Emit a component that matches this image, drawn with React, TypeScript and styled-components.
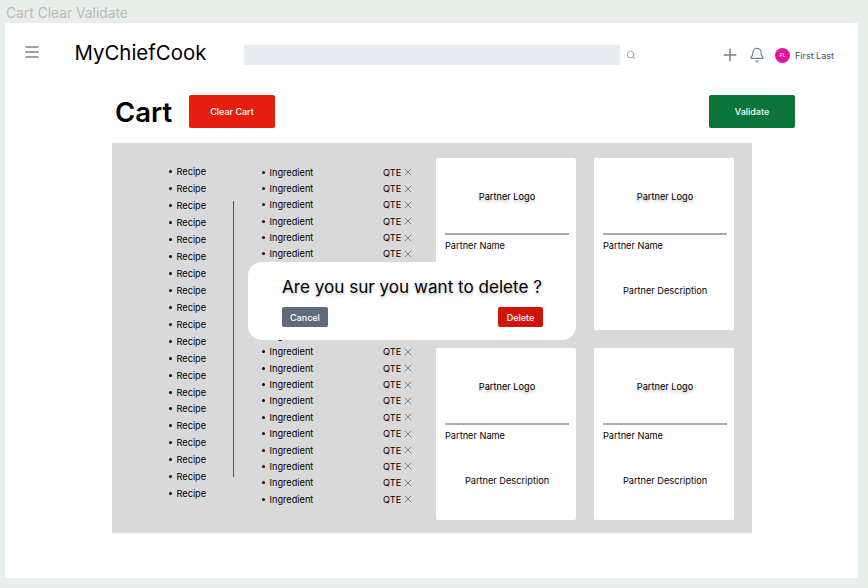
import React, { FC } from 'react'
import styled, { createGlobalStyle, css } from 'styled-components'
import { Bell, Plus, Search, X } from 'lucide-react'

const GlobalStyle = createGlobalStyle`
  html, body {
    margin: 0;
    padding: 0;
    height: 100%;
    overflow: hidden;
    background: #e8eeea;
    font-family: "Inter", "Liberation Sans", sans-serif;
  }
`

const Caption = styled.div`
  height: 23px;
  padding-left: 6px;
  font-size: 13.8px;
  line-height: 27px;
  color: #b7bdb9;
`
const Frame = styled.div`
  width: 853px;
  height: 555px;
  margin-left: 5px;
  background: #fff;
`
const TopBar = styled.header`
  display: flex;
  align-items: center;
  height: 64px;
  padding-left: 20px;
  box-sizing: border-box;
`
const MenuIcon = styled.svg`
  width: 14px;
  height: 12px;
  margin-top: -6px;
  stroke: #78828f;
  stroke-width: 1.7;
  stroke-linecap: round;
`
const Logo = styled.div`
  width: 169.5px;
  margin-left: 35.5px;
  margin-top: -6px;
  font-size: 20.4px;
  color: #000;
`
const SearchBox = styled.div`
  width: 376px;
  height: 20px;
  border-radius: 2px;
  background: #e8ebf0;
`
const SearchIcon = styled(Search)`
  margin-left: 6px;
  color: #8a929c;
`
const Actions = styled.div`
  display: flex;
  align-items: center;
  margin-left: 83.5px;
  color: #78828f;
`
const BellIcon = styled(Bell)`
  margin-left: 9.5px;
`
const Avatar = styled.div`
  display: flex;
  align-items: center;
  justify-content: center;
  width: 15px;
  height: 15px;
  margin-left: 10px;
  border-radius: 50%;
  background: #e8129a;
  color: #fff;
  font-size: 5px;
`
const UserName = styled.span`
  margin-left: 5px;
  font-size: 9px;
  color: #48505a;
`
const TitleRow = styled.div`
  display: flex;
  align-items: center;
  height: 33px;
  margin-top: 8px;
  padding-left: 110px;
`
const Title = styled.h1`
  width: 74px;
  margin: 0;
  font-size: 27.5px;
  font-weight: 600;
  color: #000;
`
const ActionButton = styled.button<{ $color: string; $pushed?: boolean }>`
  width: 86px;
  height: 33px;
  margin-left: ${p => (p.$pushed ? '434px' : '0')};
  padding: 0;
  border: 0;
  border-radius: 2px;
  background: ${p => p.$color};
  color: #fff;
  font-family: inherit;
  font-size: 9px;
  font-weight: 500;
`
const Panel = styled.section`
  position: relative;
  display: flex;
  width: 640px;
  height: 390px;
  margin: 15px 0 0 107px;
  background: #d9d9d9;
  box-sizing: border-box;
`
const bulleted = css`
  margin: 0;
  box-sizing: border-box;
  list-style: none;
  font-size: 9.2px;
  color: #000;

  li {
    display: flex;
    align-items: center;
  }
  li::before {
    content: "";
    flex: none;
    width: 3px;
    height: 3px;
    margin-right: 5px;
    border-radius: 50%;
    background: #000;
  }
`
const RecipeList = styled.ul`
  ${bulleted}
  width: 121px;
  padding: 20.4px 0 0 56.5px;

  li {
    height: 16.95px;
  }
`
const ColumnRule = styled.div`
  width: 1px;
  height: 276px;
  margin-top: 58px;
  background: #555;
`
const IngredientList = styled.ul`
  ${bulleted}
  width: 202px;
  padding: 21px 0 0 27.5px;

  li {
    height: 16.35px;
  }
`
const IngredientName = styled.span`
  width: 113.5px;
`
const RemoveIcon = styled(X)`
  margin-left: 0.5px;
  color: #6f7888;
`
const CardGrid = styled.div`
  display: grid;
  grid-template-columns: 140px 140px;
  grid-template-rows: 172px 172px;
  column-gap: 18px;
  row-gap: 18px;
  padding-top: 15px;
`
const Card = styled.article`
  display: flex;
  flex-direction: column;
  padding: 0 7px 0 9px;
  border-radius: 2px;
  background: #fff;
  font-size: 9.2px;
  color: #000;
`
const CardLogo = styled.div`
  height: 75px;
  border-bottom: 2px solid #aaa;
  line-height: 78px;
  text-align: center;
  text-shadow: 0 2px 3px rgba(0, 0, 0, 0.3);
`
const CardName = styled.div`
  margin-top: 5px;
  line-height: 12px;
`
const CardDescription = styled.div`
  margin-top: 33px;
  line-height: 12px;
  text-align: center;
`
const ConfirmModal = styled.div`
  position: absolute;
  left: 136px;
  top: 119px;
  display: flex;
  flex-direction: column;
  width: 328px;
  height: 78px;
  padding: 14px 33px 0 34px;
  box-sizing: border-box;
  border-radius: 14px;
  background: #fff;
`
const ConfirmText = styled.div`
  font-size: 17.1px;
  line-height: 22px;
  color: #000;
  white-space: nowrap;
  text-shadow: 0 2px 3px rgba(0, 0, 0, 0.25);
`
const ConfirmActions = styled.div`
  display: flex;
  justify-content: space-between;
  margin-top: 9px;
`
const ConfirmButton = styled.button<{ $color: string }>`
  min-width: 45px;
  height: 20px;
  padding: 0 8px;
  border: 0;
  border-radius: 2px;
  background: ${p => p.$color};
  color: #fff;
  font-family: inherit;
  font-size: 9px;
  font-weight: 500;
`

const recipes = Array.from({ length: 20 }, (_, i) => i)
const ingredients = Array.from({ length: 21 }, (_, i) => i)
const partners = [false, true, true, true]

const App: FC = () => {
  return (
    <>
      <GlobalStyle />
      <Caption>Cart Clear Validate</Caption>
      <Frame>
        <TopBar>
          <MenuIcon viewBox="0 0 14 12">
            <path d="M1 1h12M1 6h12M1 11h12" />
          </MenuIcon>
          <Logo>MyChiefCook</Logo>
          <SearchBox />
          <SearchIcon size={10} />
          <Actions>
            <Plus size={20} strokeWidth={1.8} />
            <BellIcon size={16} strokeWidth={1.8} />
            <Avatar>FL</Avatar>
            <UserName>First Last</UserName>
          </Actions>
        </TopBar>
        <TitleRow>
          <Title>Cart</Title>
          <ActionButton $color="#e61e10">Clear Cart</ActionButton>
          <ActionButton $color="#0b7539" $pushed>Validate</ActionButton>
        </TitleRow>
        <Panel>
          <RecipeList>
            {recipes.map(i => <li key={i}>Recipe</li>)}
          </RecipeList>
          <ColumnRule />
          <IngredientList>
            {ingredients.map(i => (
              <li key={i}>
                <IngredientName>Ingredient</IngredientName>
                <span>QTE</span>
                <RemoveIcon size={12} strokeWidth={1.8} />
              </li>
            ))}
          </IngredientList>
          <CardGrid>
            {partners.map((described, i) => (
              <Card key={i}>
                <CardLogo>Partner Logo</CardLogo>
                <CardName>Partner Name</CardName>
                {described && <CardDescription>Partner Description</CardDescription>}
              </Card>
            ))}
          </CardGrid>
          <ConfirmModal>
            <ConfirmText>Are you sur you want to delete ?</ConfirmText>
            <ConfirmActions>
              <ConfirmButton $color="#5f6b7a">Cancel</ConfirmButton>
              <ConfirmButton $color="#cf140c">Delete</ConfirmButton>
            </ConfirmActions>
          </ConfirmModal>
        </Panel>
      </Frame>
    </>
  )
}

export default App
